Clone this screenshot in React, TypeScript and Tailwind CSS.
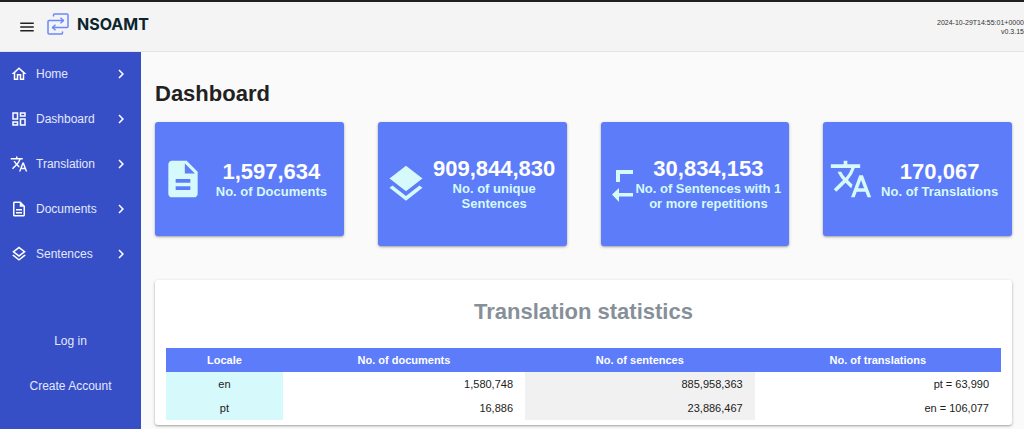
import type { ReactNode } from 'react'
import type { IconType } from 'react-icons'
import {
  MdChevronRight,
  MdDescription,
  MdLayers,
  MdMenu,
  MdOutlineDashboard,
  MdOutlineDescription,
  MdOutlineHome,
  MdOutlineLayers,
  MdTranslate,
} from 'react-icons/md'

const menuItems: { label: string; icon: IconType }[] = [
  { label: 'Home', icon: MdOutlineHome },
  { label: 'Dashboard', icon: MdOutlineDashboard },
  { label: 'Translation', icon: MdTranslate },
  { label: 'Documents', icon: MdOutlineDescription },
  { label: 'Sentences', icon: MdOutlineLayers },
]

const localeRows = [
  { locale: 'en', documents: '1,580,748', sentences: '885,958,363', translations: 'pt = 63,990' },
  { locale: 'pt', documents: '16,886', sentences: '23,886,467', translations: 'en = 106,077' },
]

function Logo() {
  return (
    <svg className="w-[22px] h-[22px] text-[#6a88fb]" viewBox="0 0 22 22" fill="none" stroke="currentColor" strokeWidth={1.5} strokeLinejoin="round">
      <path d="M6.500 3.500V2Q6.500 1 7.500 1H20Q21 1 21 2V13.500Q21 14.500 20 14.500H5.500" />
      <path d="M15.500 18.500V20Q15.500 21 14.500 21H2Q1 21 1 20V8.500Q1 7.500 2 7.500H16.500" />
      <path d="M13.500 4.700L16.500 7.500L13.500 10.300M8.500 11.700L5.500 14.500L8.500 17.300" />
    </svg>
  )
}

function RepeatIcon() {
  return (
    <svg className="w-[27px] h-11 shrink-0" viewBox="0 0 27 44" fill="currentColor">
      <path d="M9 8H26V12H13V20H9z" />
      <path d="M5 32.500L12 26V31H26V34.500H12V40z" />
    </svg>
  )
}

function StatCard({ icon, value, label }: { icon: ReactNode; value: string; label: string }) {
  return (
    <div className="flex items-center rounded-[3px] bg-[#5c7cfa] px-1.5 py-[35px] text-[#d6f9fb] shadow-sm shadow-black/30">
      {icon}
      <div className="flex-1 text-center font-bold">
        <p className="text-[22px] leading-6 text-white">{value}</p>
        <p className="text-[13px] leading-[15px]">{label}</p>
      </div>
    </div>
  )
}

export default function App() {
  return (
    <div className="flex min-h-screen flex-col bg-[#fafafa] font-['Liberation_Sans',Arial,sans-serif] text-[#212121]">
      <header className="flex h-[52px] items-center justify-between border-t-2 border-b border-t-[#231f20] border-b-[#e4e4e4] bg-[#f4f4f4]">
        <div className="flex items-center pl-[18px]">
          <button type="button" aria-label="Toggle menu" className="mr-[11px]">
            <MdMenu className="size-[18px]" />
          </button>
          <a href="#" className="flex items-center gap-2 pb-1.5">
            <Logo />
            <span className="font-['Inter',sans-serif] text-[16px] leading-6 font-bold text-[#0b252d]">NSOAMT</span>
          </a>
        </div>
        <div className="text-right text-[7px] leading-[9px] text-[#333]">
          <p>2024-10-29T14:55:01+0000</p>
          <p>v0.3.15</p>
        </div>
      </header>

      <div className="flex flex-1">
        <nav className="w-[141px] shrink-0 bg-[#364fc7] text-[12px] text-[#e3e8fb]">
          {menuItems.map(({ label, icon: Icon }) => (
            <a key={label} href="#" className="flex h-[45px] items-center pr-[11px] pb-px pl-2.5">
              <Icon className="size-[18px] text-white" />
              <span className="ml-2 flex-1">{label}</span>
              <MdChevronRight className="size-[18px] text-white" />
            </a>
          ))}
          <div className="mt-[42px] text-center leading-[45px]">
            <a href="#" className="block">Log in</a>
            <a href="#" className="block">Create Account</a>
          </div>
        </nav>

        <main className="min-w-0 flex-1 pr-3 pl-3.5">
          <h1 className="pt-7 text-[22px] leading-7 font-bold">Dashboard</h1>

          <div className="mt-3.5 grid grid-cols-4 items-start gap-[34px]">
            <StatCard icon={<MdDescription className="size-11 shrink-0" />} value="1,597,634" label="No. of Documents" />
            <StatCard icon={<MdLayers className="size-11 shrink-0" />} value="909,844,830" label="No. of unique Sentences" />
            <StatCard icon={<RepeatIcon />} value="30,834,153" label="No. of Sentences with 1 or more repetitions" />
            <StatCard icon={<MdTranslate className="size-11 shrink-0" />} value="170,067" label="No. of Translations" />
          </div>

          <section className="mt-[34px] rounded-[3px] bg-white px-[11px] pt-4 pb-[5px] shadow-sm shadow-black/30">
            <h2 className="text-center text-[22px] leading-8 font-bold text-[#869099]">Translation statistics</h2>
            <table className="mt-5 w-full table-fixed text-[11px] leading-6">
              <thead>
                <tr className="bg-[#5c7cfa] text-white">
                  <th className="w-[14%]">Locale</th>
                  <th className="w-[29%]">No. of documents</th>
                  <th className="w-[27.5%]">No. of sentences</th>
                  <th>No. of translations</th>
                </tr>
              </thead>
              <tbody>
                {localeRows.map((row) => (
                  <tr key={row.locale} className="text-right">
                    <td className="bg-[#d6f9fb] text-center">{row.locale}</td>
                    <td className="pr-3">{row.documents}</td>
                    <td className="bg-[#f1f1f1] pr-3">{row.sentences}</td>
                    <td className="pr-3">{row.translations}</td>
                  </tr>
                ))}
              </tbody>
            </table>
          </section>
        </main>
      </div>
    </div>
  )
}
